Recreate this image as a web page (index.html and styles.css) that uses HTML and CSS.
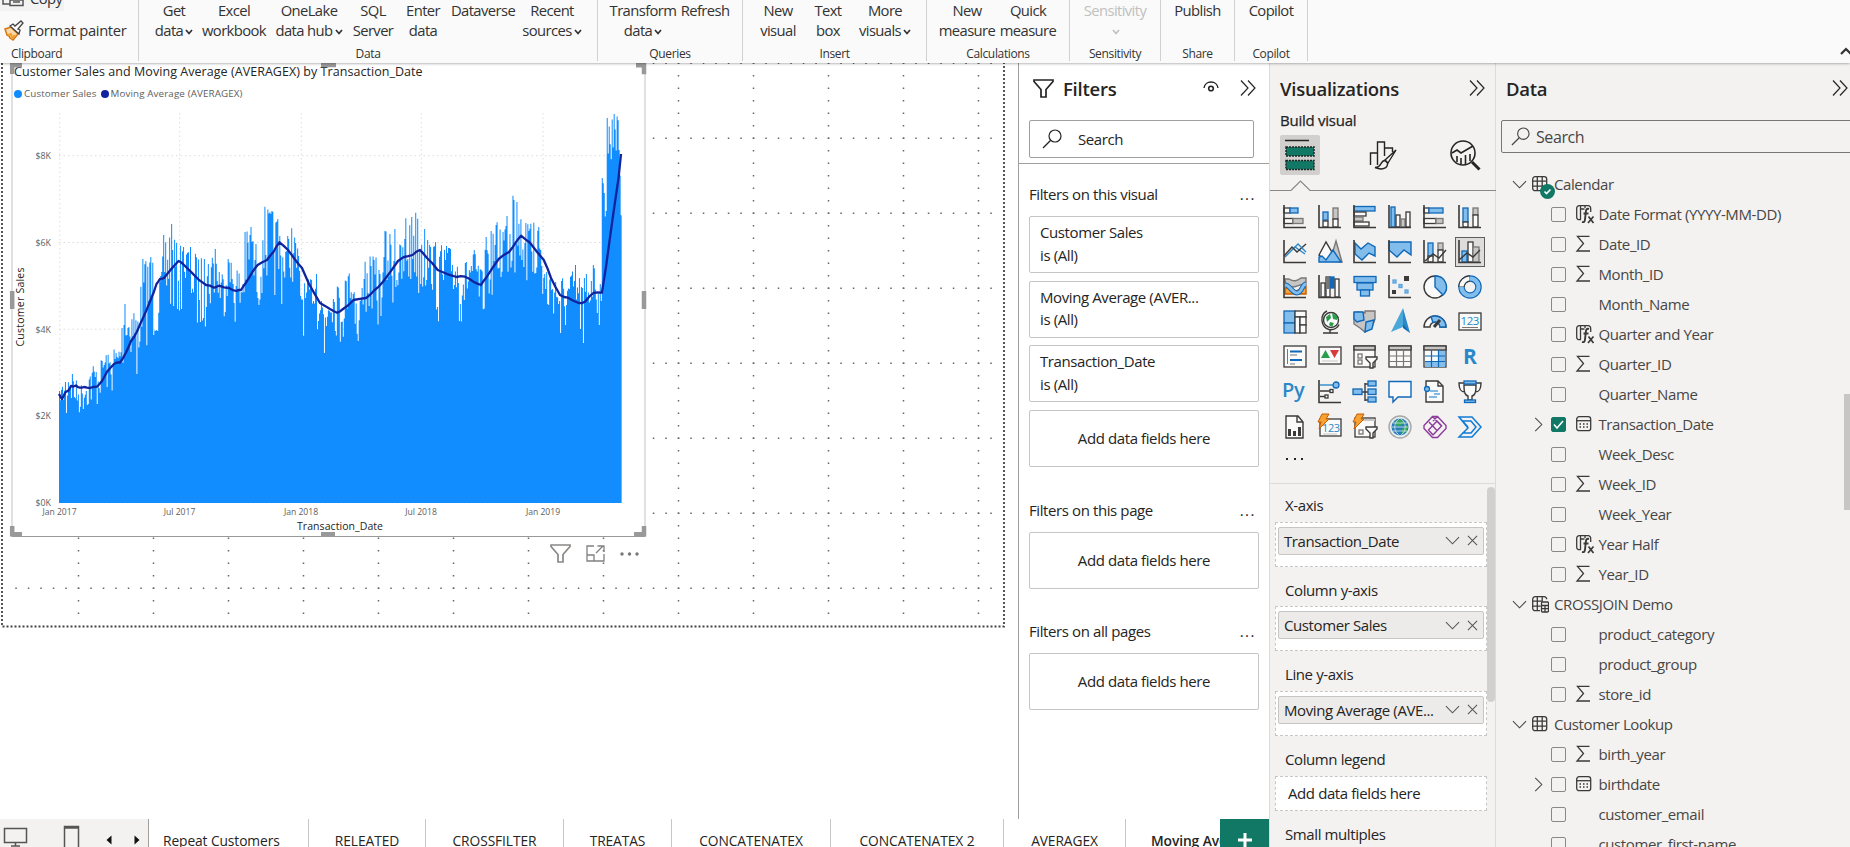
FILE: index.html
```html
<!DOCTYPE html>
<html lang="en">
<head>
<meta charset="utf-8">
<title>Report</title>
<link rel="stylesheet" href="styles.css">
</head>
<body>
<svg class="defs" width="0" height="0">
  <symbol id="collapse" viewBox="0 0 16 16"><path d="M1 .5L8 8l-7 7.5M8 .5L15 8l-7 7.5" fill="none" stroke="currentColor" stroke-width="1.2"/></symbol>
  <symbol id="search" viewBox="0 0 20 20"><circle cx="13" cy="7" r="6" fill="none" stroke="currentColor" stroke-width="1.2"/><path d="M8.7 11.3L1 19" stroke="currentColor" stroke-width="1.3"/></symbol>
  <symbol id="funnel" viewBox="0 0 21 19"><path d="M1 1h19v1.5l-7 8V18H8v-7.500L1 2.500z" fill="none" stroke="currentColor" stroke-width="1.7"/></symbol>
  <symbol id="down" viewBox="0 0 16 9"><path d="M1 1l7 7 7-7" fill="none" stroke="currentColor" stroke-width="1.1"/></symbol>
  <symbol id="right" viewBox="0 0 9 16"><path d="M1 1l7 7-7 7" fill="none" stroke="currentColor" stroke-width="1.1"/></symbol>
  <symbol id="close" viewBox="0 0 12 12"><path d="M1 1l10 10M11 1L1 11" stroke="currentColor" stroke-width="1.1"/></symbol>
  <symbol id="caret" viewBox="0 0 8 6"><path d="M1 1l3 3.500L7 1" fill="none" stroke="currentColor" stroke-width="1.7"/></symbol>
  <symbol id="sum" viewBox="0 0 18 18"><path d="M14.500 1.300H2.500L8.500 8.500l-6.500 7.500h13" fill="none" stroke="currentColor" stroke-width="1.300"/></symbol>
  <symbol id="table" viewBox="0 0 18 18"><rect x="1.700" y="1.700" width="14" height="14" rx="2.500"/><path d="M6.300 1.700v14M11.200 1.700v14M1.700 6.200h14M1.700 11.200h14"/></symbol>
  <symbol id="calc" viewBox="0 0 18 18"><path d="M9 15.700H4.200a2.500 2.500 0 0 1-2.500-2.500V4.200a2.500 2.500 0 0 1 2.500-2.500h9a2.500 2.500 0 0 1 2.500 2.500M6.300 1.700v14M11.200 1.700v5M1.700 6.200h9M1.700 11.200h8"/><rect x="10.500" y="7" width="7" height="10" rx="1"/><path d="M10.500 10.500h7M14 10.500V17M10.500 13.700h7"/></symbol>
  <symbol id="fx" viewBox="0 0 20 20"><path d="M6 15.700H4.200a2.500 2.500 0 0 1-2.500-2.500V4.200a2.500 2.500 0 0 1 2.500-2.500h9a2.500 2.500 0 0 1 2.500 2.500V8M5.500 1.700v14M5.500 5h4M10 1.700V4"/><path d="M14 5c-2.500-.8-3 .8-3.200 3L10 15.500c-.2 2-1 3-3 2.500M8.500 9.500h5" stroke-width="1.900"/><path d="M13.500 12.500l5 6.500M18.500 12.500l-5.500 6.500" stroke-width="1.700"/></symbol>
  <symbol id="date" viewBox="0 0 18 18"><rect x="1.700" y="1.700" width="14" height="14" rx="2.500"/><path d="M1.700 5.700h14"/><path d="M8 9h1.500M11.500 9H13M4.500 12H6M8 12h1.500M11.500 12H13M4.500 9H6" stroke-width="1.600"/></symbol>
</svg>

<div class="app">
  <header class="ribbon">
    <section class="group clip">
      <div class="copy"><svg width="24" height="8"><path d="M3 0v4h7M10 0h13v5.500H10zM13 2h7" fill="none" stroke="#555" stroke-width="1.500"/></svg><span>Copy</span></div>
      <div class="painter"><svg width="21" height="21" viewBox="0 0 21 21"><path d="M2 9l6-2 7 7-5 6-3-2-1-2-2-1-1-3z" fill="#fbd9a6" stroke="#d9730d" stroke-width="1.500"/><path d="M5 15l3-1 1 4 3-3" stroke="#f0a030" fill="none" stroke-width="2"/><path d="M7 6l9 8 1-4-2-1 5-6-2-2-6 5-2-2z" fill="#fafafa" stroke="#444" stroke-width="1.300"/></svg><span>Format painter</span></div>
      <h6>Clipboard</h6>
    </section>
    <section class="group g-data">
      <div class="cmds">
        <div class="cmd w64"><span>Get</span><span>data<svg class="caret"><use href="#caret"/></svg></span></div>
        <div class="cmd w56"><span>Excel</span><span>workbook</span></div>
        <div class="cmd w94"><span>OneLake</span><span>data hub<svg class="caret"><use href="#caret"/></svg></span></div>
        <div class="cmd w34"><span>SQL</span><span>Server</span></div>
        <div class="cmd w66"><span>Enter</span><span>data</span></div>
        <div class="cmd w54"><span>Dataverse</span></div>
        <div class="cmd w84"><span>Recent</span><span>sources<svg class="caret"><use href="#caret"/></svg></span></div>
      </div>
      <h6>Data</h6>
    </section>
    <section class="group g-queries">
      <div class="cmds">
        <div class="cmd w84"><span>Transform</span><span>data<svg class="caret"><use href="#caret"/></svg></span></div>
        <div class="cmd w40"><span>Refresh</span></div>
      </div>
      <h6>Queries</h6>
    </section>
    <section class="group g-insert">
      <div class="cmds">
        <div class="cmd w50"><span>New</span><span>visual</span></div>
        <div class="cmd w50"><span>Text</span><span>box</span></div>
        <div class="cmd w64"><span>More</span><span>visuals<svg class="caret"><use href="#caret"/></svg></span></div>
      </div>
      <h6>Insert</h6>
    </section>
    <section class="group g-calc">
      <div class="cmds">
        <div class="cmd w62"><span>New</span><span>measure</span></div>
        <div class="cmd w60"><span>Quick</span><span>measure</span></div>
      </div>
      <h6>Calculations</h6>
    </section>
    <section class="group g-sens">
      <div class="cmds"><div class="cmd off"><span>Sensitivity</span><span><svg class="caret"><use href="#caret"/></svg></span></div></div>
      <h6>Sensitivity</h6>
    </section>
    <section class="group g-share">
      <div class="cmds"><div class="cmd"><span>Publish</span></div></div>
      <h6>Share</h6>
    </section>
    <section class="group g-copilot">
      <div class="cmds"><div class="cmd"><span>Copilot</span></div></div>
      <h6>Copilot</h6>
    </section>
    <svg class="fold" width="10" height="8"><path d="M1 7l5-5 5 5" fill="none" stroke="#333" stroke-width="2.200"/></svg>
  </header>

  <main class="main">
    <div class="left">
      <div class="work">
        <div class="canvas">
          <svg class="page" id="page" width="1018" height="756" viewBox="0 63 1018 756"></svg>
          <div class="visual">
            <h1>Customer Sales and Moving Average (AVERAGEX) by Transaction_Date</h1>
            <div class="legend"><i></i><span>Customer Sales</span><i class="navy"></i><span>Moving Average (AVERAGEX)</span></div>
            <svg class="plot" id="plot" width="632" height="430" viewBox="12 104 632 430"></svg>
          </div>
          <svg class="handles" width="640" height="480" viewBox="8 62 640 480"><g fill="none" stroke="#999" stroke-width="4.500"><path d="M12.200 74V65.200H22M636 65.200h8v9M12.200 526v8.300H22M634 534.300h10V526M321 65h15M321 534.300h14M12.200 291v18M644 291v18"/></g></svg>
          <div class="tools">
            <svg width="21" height="19"><use href="#funnel"/></svg>
            <svg width="19" height="17" viewBox="0 0 19 17" fill="none" stroke="#808080" stroke-width="1.300"><path d="M8 1H1v15h17V9M1 10h7v6M10 8l7-7M11.500 1H18v6"/></svg>
            <svg width="19" height="4"><g fill="#777"><circle cx="2" cy="2" r="1.700"/><circle cx="9.500" cy="2" r="1.700"/><circle cx="17" cy="2" r="1.700"/></g></svg>
          </div>
        </div>

        <aside class="filters">
          <div class="fhead">
            <svg width="21" height="19"><use href="#funnel"/></svg><h2>Filters</h2>
            <svg class="eye" width="16" height="11" viewBox="0 0 16 11" fill="none" stroke="#252423"><path d="M1 7c1-8 13-8 14 0" stroke-width="1.400"/><circle cx="8" cy="7.500" r="2.300" stroke-width="1.600"/></svg>
            <svg width="16" height="16"><use href="#collapse"/></svg>
          </div>
          <div class="fsearch"><svg width="20" height="20"><use href="#search"/></svg><span>Search</span></div>
          <div class="flist">
            <div class="ftitle first"><span>Filters on this visual</span><b>...</b></div>
            <div class="card"><span>Customer Sales</span><span>is (All)</span></div>
            <div class="card"><span>Moving Average (AVER...</span><span>is (All)</span></div>
            <div class="card"><span>Transaction_Date</span><span>is (All)</span></div>
            <div class="card add">Add data fields here</div>
            <div class="ftitle"><span>Filters on this page</span><b>...</b></div>
            <div class="card add">Add data fields here</div>
            <div class="ftitle"><span>Filters on all pages</span><b>...</b></div>
            <div class="card add">Add data fields here</div>
          </div>
        </aside>
      </div>
      <nav class="tabs">
        <div class="nav">
          <svg width="148" height="28"><g fill="none" stroke="#555" stroke-width="1.500"><rect x="4.500" y="9.500" width="22" height="14"/><path d="M11 27h9M15.500 24v3"/><path d="M64.500 28V7.500h14V28M64 9h15"/></g><path d="M111.500 16.500l-5 4.500 5 4.500zM134.500 16.500l5 4.500-5 4.500z" fill="#111"/></svg>
        </div>
        <div class="tab t1">Repeat Customers</div>
        <div class="tab t2">RELEATED</div>
        <div class="tab t3">CROSSFILTER</div>
        <div class="tab t4">TREATAS</div>
        <div class="tab t5">CONCATENATEX</div>
        <div class="tab t6">CONCATENATEX 2</div>
        <div class="tab t7">AVERAGEX</div>
        <div class="tab t8">Moving Average</div>
        <div class="plus"><svg width="14" height="14"><path d="M7 0v14M0 7h14" stroke="#fff" stroke-width="3"/></svg></div>
      </nav>
    </div>

    <aside class="viz">
      <div class="vhead"><h2>Visualizations</h2><svg width="16" height="16"><use href="#collapse"/></svg></div>
      <h3>Build visual</h3>
      <div class="modes">
        <div class="mode on"><svg width="32" height="32" viewBox="0 0 32 32"><path d="M1 1.500h24" stroke="#252423" stroke-width="1.500"/><g fill="#117865" stroke="#252423" stroke-width="1.500" stroke-dasharray="2 1"><rect x="2" y="8" width="28" height="9"/><rect x="2" y="21.500" width="28" height="9"/></g></svg></div>
        <div class="mode"><svg width="28" height="30" viewBox="0 0 28 30" fill="none" stroke="#252423" stroke-width="1.400"><path d="M1.500 25V13h7v12M8.500 13V2h7v14M15.500 8h8v4"/><path d="M27 10L16 20l3 3z" fill="#f3f2f1"/><path d="M16 20.500c-5 0-3 7-10 7 7 3 13 1 12.500-4.500z" fill="#f3f2f1"/></svg></div>
        <div class="mode"><svg width="31" height="31" viewBox="0 0 31 31" fill="none" stroke="#252423" stroke-width="1.600"><circle cx="13" cy="13" r="12"/><path d="M2 13l5-3 4 3 12-7M7 16v6M11 18v6M15.500 15v9M20 14v7"/><path d="M22 22l7.500 7.500" stroke-width="3"/></svg></div>
      </div>
      <svg class="notch" width="226" height="12" viewBox="0 0 226 12"><path d="M0 10.500h21L30.500 1 40 10.500h186" fill="none" stroke="#8a8886" stroke-width="1.200"/></svg>
      <div class="gallery" id="gallery"></div>
      <div class="more"><i></i><i></i><i></i></div>
      <div class="wells">
        <div class="well"><label>X-axis</label><div class="drop"><div class="pill"><span>Transaction_Date</span><svg width="15" height="9"><use href="#down"/></svg><svg width="11" height="11"><use href="#close"/></svg></div></div></div>
        <div class="well"><label>Column y-axis</label><div class="drop"><div class="pill"><span>Customer Sales</span><svg width="15" height="9"><use href="#down"/></svg><svg width="11" height="11"><use href="#close"/></svg></div></div></div>
        <div class="well"><label>Line y-axis</label><div class="drop"><div class="pill"><span>Moving Average (AVE...</span><svg width="15" height="9"><use href="#down"/></svg><svg width="11" height="11"><use href="#close"/></svg></div></div></div>
        <div class="well short"><label>Column legend</label><div class="drop empty">Add data fields here</div></div>
        <div class="well"><label>Small multiples</label></div>
        <div class="vscroll"></div>
      </div>
    </aside>

    <aside class="data">
      <div class="dhead"><h2>Data</h2><svg width="16" height="16"><use href="#collapse"/></svg></div>
      <div class="dsearch"><svg width="19" height="19"><use href="#search"/></svg><span>Search</span></div>
      <div class="tree" id="tree"></div>
      <div class="dscroll"></div>
    </aside>
  </main>
</div>
<script src="app.js"></script>
</body>
</html>
```
FILE: styles.css
```css
* { box-sizing: border-box; }
body { margin: 0; width: 1850px; height: 847px; overflow: hidden; font-family: "Open Sans", "Noto Sans", sans-serif; font-size: 15px; letter-spacing: -0.4px; color: #252423; background: #fff; }
h1, h2, h3, h6 { margin: 0; font-weight: 400; }
svg { display: block; flex: none; overflow: visible; }
.defs { position: absolute; }
.app { display: flex; flex-direction: column; height: 847px; }

/* ribbon */
.ribbon { position: relative; z-index: 5; height: 63px; flex: none; display: flex; background: #fafafa; box-shadow: 0 0 3px rgba(0,0,0,.5); font-size: 14.8px; letter-spacing: -0.6px; color: #333; }
.group { height: 61px; border-right: 1px solid #d0d0d0; display: flex; flex-direction: column; justify-content: space-between; }
.group h6 { font-size: 12px; letter-spacing: -0.35px; line-height: 16px; text-align: center; margin-bottom: -1px; }
.clip { width: 139px; }
.clip h6 { text-align: left; padding-left: 11px; }
.copy { display: flex; height: 11px; width: 64px; background: #f3f3f3; gap: 6px; }
.copy span { line-height: 20px; margin-top: -12px; }
.painter { display: flex; align-items: center; gap: 4px; padding-left: 3px; height: 24px; margin-bottom: -3px; letter-spacing: -0.35px; }
.cmds { display: flex; line-height: 20px; }
.cmd { display: flex; flex-direction: column; align-items: center; white-space: nowrap; }
.cmd span { display: flex; align-items: center; height: 20px; }
.caret { width: 8px; height: 6px; margin-left: 2px; margin-top: 4px; }
.off { color: #c0c0c0; }
.g-data { width: 459px; } .g-data .cmds { padding-left: 3px; }
.g-queries { width: 145px; } .g-queries .cmds { padding-left: 3px; }
.g-insert { width: 184px; } .g-insert .cmds { padding-left: 10px; }
.g-calc { width: 143px; } .g-calc .cmds { padding-left: 9px; }
.g-sens { width: 91px; } .g-share { width: 74px; } .g-copilot { width: 73px; }
.g-sens .cmds, .g-share .cmds, .g-copilot .cmds { justify-content: center; }
.w34 { width: 34px; } .w40 { width: 40px; } .w50 { width: 50px; } .w54 { width: 54px; } .w56 { width: 56px; } .w60 { width: 60px; } .w62 { width: 62px; } .w64 { width: 64px; } .w66 { width: 66px; } .w84 { width: 84px; } .w94 { width: 94px; }
.fold { margin: 47px 0 0 auto; width: 10px; }

.main { flex: 1; display: flex; min-height: 0; }
.left { width: 1269px; display: flex; flex-direction: column; }
.work { height: 756px; display: flex; }
.canvas { width: 1018px; position: relative; background: #fff; }
.page { position: absolute; left: 0; top: 0; }

/* visual */
.visual { position: absolute; left: 11px; top: 0; width: 635px; height: 474px; background: #fff; border: 2px solid #e1e1e1; border-top: 0; border-bottom: 1px solid #999; }
.visual h1 { font-size: 12.5px; line-height: 16px; letter-spacing: 0.05px; padding: 1px 0 0 1px; white-space: nowrap; }
.legend { display: flex; align-items: center; font-size: 9.800px; letter-spacing: 0.12px; line-height: 12px; color: #605e5c; padding: 8px 0 0 1px; white-space: nowrap; }
.legend i { width: 8px; height: 8px; border-radius: 50%; background: #118dff; margin-right: 2px; }
.legend i.navy { background: #12239e; margin-left: 4px; }
.plot { position: absolute; left: -1px; top: 41px; letter-spacing: 0; }
.handles { position: absolute; left: 8px; top: -1px; }
.tools { position: absolute; left: 550px; top: 481px; display: flex; gap: 15px; align-items: center; color: #8a8886; }

/* filters */
.filters { width: 251px; border-left: 1px solid #a19f9d; background: #fff; }
.fhead { display: flex; align-items: center; height: 48px; padding: 2px 13px 0 14px; }
h2 { font-size: 18.500px; font-weight: 600; letter-spacing: -0.25px; }
.fhead h2 { margin-left: 9px; }
.fhead .eye { margin: -3px 21px 0 auto; }
.fsearch { margin: 9px 0 5px 10px; width: 225px; height: 38px; border: 1px solid #a19f9d; border-radius: 2px; display: flex; align-items: center; padding-left: 12px; gap: 16px; }
.flist { border-top: 1px solid #a19f9d; padding: 19px 9px 0 10px; }
.ftitle { height: 22px; margin: 31.500px 0 11px; display: flex; justify-content: space-between; align-items: center; }
.ftitle.first { margin-top: 0; }
.ftitle b { font-weight: 400; letter-spacing: 1.500px; margin-right: 4px; }
.card { height: 57px; width: 230px; border: 1px solid #c8c6c4; border-radius: 2px; margin-bottom: 7.700px; padding: 4px 10px; display: flex; flex-direction: column; line-height: 22.500px; }
.card.add { align-items: center; justify-content: center; }

/* page tabs */
.tabs { height: 28px; display: flex; overflow: hidden; font-size: 13.800px; letter-spacing: -0.1px; }
.nav { width: 149px; background: #f3f2f1; border-right: 1px solid #a19f9d; }
.tab { border-right: 1px solid #c8c6c4; height: 28px; line-height: 20px; padding-top: 12px; text-align: center; white-space: nowrap; overflow: hidden; }
.t1 { width: 160px; text-align: left; padding-left: 14px; } .t2 { width: 117px; } .t3 { width: 138px; } .t4 { width: 108px; } .t5 { width: 159px; } .t6 { width: 173px; } .t7 { width: 122px; }
.t8 { width: 94px; text-align: left; padding-left: 25px; border: 0; font-weight: 600; }
.plus { width: 49px; background: #117865; display: flex; justify-content: center; padding-top: 14px; }

/* visualizations */
.viz { width: 227px; background: #f3f2f1; border: solid #dcdbda; border-width: 0 1px; display: flex; flex-direction: column; }
.vhead { height: 47px; padding: 3px 10px 0; display: flex; justify-content: space-between; align-items: center; }
h3 { font-size: 15px; padding-left: 10px; line-height: 20px; height: 25px; letter-spacing: -0.25px; -webkit-text-stroke: .25px #252423; }
.modes { display: flex; padding-left: 10px; height: 40px; gap: 42.500px; }
.mode { width: 40px; height: 40px; display: flex; align-items: center; justify-content: center; }
.mode.on { background: #d2d0ce; border-radius: 2px; }
.notch { margin-top: 5px; }
.gallery { display: grid; grid-template-columns: repeat(6, 35px); grid-auto-rows: 35px; padding: 7px 0 0 7px; }
.gallery div { display: flex; align-items: center; justify-content: center; }
.gallery .sel { background: #dedddc; box-shadow: inset 0 0 0 1px #605e5c; margin: 2.500px; }
.more { display: flex; gap: 5.500px; padding: 14px 0 0 16px; }
.more i { width: 2px; height: 2px; background: #252423; }
.wells { margin-top: 23px; flex: 1; overflow: hidden; border-top: 1px solid #dcdbda; position: relative; }
.well { height: 84.700px; padding-left: 5px; }
.well label { display: block; height: 37.500px; line-height: 42px; padding-left: 10px; }
.drop { width: 212px; height: 45px; border: 1px dashed #c8c6c4; background: #fff; padding: 4px 2px; }
.pill { height: 28px; border: 1px solid #c8c6c4; border-radius: 2px; background: #edebe9; display: flex; align-items: center; padding: 0 5px; }
.pill span { flex: 1; white-space: nowrap; }
.pill svg { color: #555; }
.pill svg + svg { margin-left: 7px; }
.empty { height: 35px; padding: 0 0 0 12px; line-height: 32px; }
.well.short { height: 84.200px; height: 74.700px; }
.vscroll { position: absolute; right: 0; top: 3px; width: 8px; height: 215px; border-radius: 4px; background: #d2d0ce; }

/* data */
.data { width: 354px; background: #f3f2f1; position: relative; }
.dhead { height: 57px; padding: 0 2px 7px 10px; display: flex; justify-content: space-between; align-items: center; }
.dsearch { margin-left: 5px; width: 360px; height: 33px; border: 1px solid #797775; border-radius: 2px; display: flex; align-items: center; padding-left: 9px; gap: 6px; font-size: 16px; color: #484644; }
.tree { padding-top: 16px; height: 694px; overflow: hidden; color: #484644; }
.row { height: 30px; display: flex; align-items: center; white-space: nowrap; }
.row.parent { padding-left: 16px; }
.row.parent > svg:first-child { width: 15px; height: 9px; margin-right: 4px; }
.row.parent .ico { width: 23px; position: relative; }
.ico svg { color: #3b3a39; fill: none; stroke: #3b3a39; stroke-width: 1.300; }
.ico .badge { position: absolute; left: 9px; top: 9px; stroke: none; }
.row.child { padding-left: 38px; }
.exp { width: 17px; }
.exp svg { width: 9px; height: 15px; }
.box { width: 15px; height: 15px; border: 1px solid #8a8886; border-radius: 2px; margin-right: 9px; }
.box.on { background: #117865; border-color: #117865; }
.row.child .ico { width: 23.500px; }
.dscroll { position: absolute; right: 0; top: 331px; width: 6px; height: 116px; background: #c8c6c4; }
```
FILE: app.js
```js
// ---------- data tree ----------
const fields = [
  ['p', 'table', 'Calendar', 'badge'], ['c', 'fx', 'Date Format (YYYY-MM-DD)'], ['c', 'sum', 'Date_ID'], ['c', 'sum', 'Month_ID'],
  ['c', '', 'Month_Name'], ['c', 'fx', 'Quarter and Year'], ['c', 'sum', 'Quarter_ID'], ['c', '', 'Quarter_Name'],
  ['c', 'date', 'Transaction_Date', 'on'], ['c', '', 'Week_Desc'], ['c', 'sum', 'Week_ID'], ['c', '', 'Week_Year'],
  ['c', 'fx', 'Year Half'], ['c', 'sum', 'Year_ID'], ['p', 'calc', 'CROSSJOIN Demo'], ['c', '', 'product_category'],
  ['c', '', 'product_group'], ['c', 'sum', 'store_id'], ['p', 'table', 'Customer Lookup'], ['c', 'sum', 'birth_year'],
  ['c', 'date', 'birthdate'], ['c', '', 'customer_email'], ['c', '', 'customer_first-name']
];
const badge = '<svg class="badge" width="15" height="15"><circle cx="7.500" cy="7.500" r="7.500" fill="#117865"/><path d="M4.500 7.500l2 2 4-4" fill="none" stroke="#fff" stroke-width="1.600"/></svg>';
document.getElementById('tree').innerHTML = fields.map(([kind, icon, name, flag]) => {
  const size = icon === 'fx' ? 20 : 18;
  const pic = icon ? `<svg width="${size}" height="${size}"><use href="#${icon}"/></svg>` : '';
  if (kind === 'p') return `<div class="row parent"><svg><use href="#down"/></svg><div class="ico">${pic}${flag ? badge : ''}</div><span>${name}</span></div>`;
  const exp = icon === 'date' ? '<svg><use href="#right"/></svg>' : '';
  const tick = flag ? '<svg width="13" height="13"><path d="M2 6.500l3 3.500 6-7" fill="none" stroke="#fff" stroke-width="1.500"/></svg>' : '';
  return `<div class="row child"><div class="exp">${exp}</div><div class="box ${flag || ''}">${tick}</div><div class="ico">${pic}</div><span>${name}</span></div>`;
}).join('');

// ---------- visual gallery ----------
const D = '#3b3a39', B = '#1068b8', F = '#83bdec', G = '#c8c6c4', H = '#797775';
const r = (x, y, w, h, f, s) => `<rect x="${x}" y="${y}" width="${w}" height="${h}" fill="${f}" stroke="${s}"/>`;
const p = (d, f = 'none', s = D, w = 1.4) => `<path d="${d}" fill="${f}" stroke="${s}" stroke-width="${w}"/>`;
const t = (x, y, size, s, weight = 400) => `<text x="${x}" y="${y}" font-size="${size}" font-weight="${weight}" fill="#2b88c8" stroke="none">${s}</text>`;
const axis = p('M1 0v22.500h22', 'none', D, 1.6);
const W = '#fafafa';
const funnel = p('M13 12h11v2l-4 4v5h-3v-5l-4-4z', W);
const bolt = '<path d="M4-1h7l-3 5h3L1 14l2-7H0z" fill="#f7a233" stroke="#c65d00" stroke-width="1"/>';
const icons = [
  r(1, 3, 6, 5, W, D) + r(7, 3, 8, 5, F, B) + r(1, 13.5, 9, 5, W, D) + r(10, 13.5, 10, 5, G, H) + axis,
  r(5, 7, 5, 8, F, B) + r(5, 16, 5, 6, W, D) + r(15, 3, 5, 11, G, H) + r(15, 14, 5, 8, W, D) + axis,
  r(1, 1.500, 21, 4.500, F, B) + r(1, 7, 12, 4, W, D) + r(1, 12, 9, 4, G, H) + r(1, 17, 15, 4, W, D) + axis,
  r(3, 2, 4, 20, F, B) + r(8, 10, 4, 12, W, D) + r(13, 14, 4, 8, G, H) + r(18, 7, 4, 15, W, D) + axis,
  r(1, 3, 5, 5, W, D) + r(6, 3, 14, 5, F, B) + r(1, 13.5, 12, 5, W, D) + r(13, 13.5, 7, 5, G, H) + axis,
  r(5, 3, 5, 14, F, B) + r(5, 17, 5, 5, W, D) + r(15, 3, 5, 7, G, H) + r(15, 10, 5, 12, W, D) + axis,

  p('M2 17L12 7l10 7', 'none', '#2b88c8') + p('M1 16l8-9 5 5 9-8') + p('M12 7l3-3 8 8', 'none', '#2b88c8') + axis,
  p('M12 21L18 1l6 21z', G, H) + p('M1 15L8 2l7 12-7 7z', W) + p('M1 22V17l3-1 4 4 7-10 8 12z', F, B),
  p('M2 3l6 6 7-6 7 4v9l-6-3-7 7-7-6z', F, B) + axis,
  p('M1 2h22v13l-7-5-7 7-8-7z', F, B) + axis,
  r(5, 3, 5, 14, F, B) + r(15, 3, 5, 7, G, H) + r(5, 16, 5, 6, W, D) + r(15, 10, 5, 12, W, D) + p('M2 21l8-7 6 4 7-8') + axis,
  r(4, 11, 5, 11, F, B) + r(10, 2, 5, 20, W, D) + r(15, 7, 6, 15, G, H) + p('M1 20l8-7 6 4 7-7') + axis,

  p('M2 4h4c5 3 8 2 12-1h5v7c-6-3-10 5-20 1z', G, H) + p('M2 13h6l5 3 10-4v7H2z', '#f7a233', '#c65d00') + p('M2 10c4-1 7 8 12 8s5-9 9-9', 'none', B, 5) + p('M2 10c4-1 7 8 12 8s5-9 9-9', 'none', F, 3) + axis,
  r(3, 8, 4, 14, W, D) + r(8, 2, 4, 20, W, D) + r(12, 2, 4, 11, B, B) + r(17, 4, 4, 18, W, D) + p('M10 2v12', 'none', H, 3) + axis,
  r(1, 1.500, 22, 6, F, B) + r(4, 8, 16, 7, F, B) + r(7.500, 15, 9, 6, F, B),
  `<path d="M16 1h5v5h-5zM4 15h4v4H4z" fill="${D}"/>` + r(5, 5, 3, 3, F, '#5ba4dc') + r(11, 9.500, 3, 3, F, '#5ba4dc') + r(17, 15, 3, 3, F, '#5ba4dc') + axis,
  `<circle cx="12" cy="12" r="11" fill="${W}" stroke="${D}" stroke-width="1.4"/>` + p('M12 1v11l8 8A11 11 0 0 0 12 1z', F, B),
  `<circle cx="12" cy="12" r="8.500" fill="none" stroke="${B}" stroke-width="6.500"/><circle cx="12" cy="12" r="8.500" fill="none" stroke="${F}" stroke-width="4.200"/>` + p('M12 3.500A8.500 8.500 0 0 0 3.500 12', 'none', D, 6.500) + p('M11.500 3.500A8.500 8.500 0 0 0 3.500 11.500', 'none', W, 4.200),

  r(1, 1, 11, 12, F, B) + r(1, 13, 11, 10, F, B) + r(12, 1, 11, 6, W, D) + r(12, 7, 5, 16, W, D) + r(17, 7, 6, 8, W, D) + r(17, 15, 6, 8, W, D),
  `<circle cx="13" cy="10" r="7.500" fill="${W}" stroke="${D}" stroke-width="1.4"/><path d="M8 7l4-3 1 4-4 4zM14 3l5 3v4l-4-1zM12 12l4 1-2 4-3-2z" fill="#2a9d4a"/>` + p('M9 1C1 5 3 17 11 19.500c5 1 9-2 10-5M12 20v3M5 23h15'),
  p('M1 3l4-1 7 1V1h10v8l-3 8-7 5-5-4-6-4z', G, H) + p('M1 2h9l1 8-7 2-3-3zM13 12l8-2-2 9-7 3z', F, B),
  '<path d="M15-2L3 22l12-5z" fill="#4aa8d8"/><path d="M15-2v19l7 6z" fill="#2b88c8"/><path d="M15 14l7 9-7-5z" fill="#1068b8"/>',
  p('M1 17a11 11 0 0 1 22 0h-6a5 5 0 0 0-10 0z', W) + p('M8 6.800A11 11 0 0 1 23 17h-6a5 5 0 0 0-7-4.500z', F, B) + p('M11 17l6-7', 'none', D, 3),
  r(1, 3, 22, 17, W, D) + t(2.500, 15, 11.500, '123') + p('M4 17.500h16', 'none', H, 1),

  r(1, 1, 22, 21, W, D) + p('M4.500 4v15', 'none', H, 1) + p('M7 6.500h12M7 15h12', 'none', B, 2.200) + p('M7 10h7M7 19h5', 'none', H, 1.200),
  r(1, 2, 22, 17, W, D) + '<path d="M3 13l4.500-8 4.500 8z" fill="#2a9d4a"/><path d="M12 5h9l-4.500 8z" fill="#d83b3b"/>' + p('M4 16h16', 'none', G, 1),
  r(1, 1, 21, 21, W, D) + r(1, 1, 21, 4, G, D) + r(5, 9, 4, 4, W, H) + r(5, 15, 4, 4, W, H) + funnel,
  r(1, 1, 22, 21, W, D) + r(1, 1, 22, 4, G, D) + p('M1 11h22M1 16.500h22M8.500 5v17M15.500 5v17', 'none', H, 1.200),
  r(1, 1, 22, 21, W, D) + '<path d="M15 5h7v17H2v-6h13z" fill="#83bdec"/>' + r(1, 1, 22, 4, G, D) + p('M2 11h20M2 16.500h20M8.500 5v17M15.500 5v17', 'none', B, 1.200),
  t(5, 19, 21, 'R', 700),

  t(-1, 17, 20, 'Py', 600),
  p('M2 5h15', 'none', '#2b88c8') + p('M2 11h10M2 16.500h5') + r(12, 9.500, 3, 3, W, D) + r(7, 15, 3, 3, W, D) + `<circle cx="18" cy="5" r="3" fill="${F}" stroke="${B}"/>` + axis,
  p('M9 12h7M12 3v18M12 4h4M12 20h4') + r(0, 9, 9, 5.500, F, B) + r(15, 1, 8, 5, F, B) + r(15, 9, 8, 5.500, F, B) + r(15, 17, 8, 5, F, B),
  p('M1 1.500h22V17H10l-5 5v-5H1z', W, B),
  p('M3 1h12l5 5v16H3z', W) + p('M15 1v5h5') + p('M7 11h8M11 14h6M6 17h8', 'none', '#5ba4dc') + `<circle cx="4" cy="9" r="2.500" fill="${F}" stroke="${B}"/>`,
  p('M6 3H1c0 7 2 9 6 9M18 3h5c0 7-2 9-6 9M6 5c0 8 1 10 4 11v4h4v-4c3-1 4-3 4-11z', W) + r(6, 1, 12, 3, F, B) + r(6.500, 20, 11, 2.500, F, B),

  p('M3 1h12l5 6v16H3z', W) + p('M14 1v6h6') + p('M6.500 21v-7M11.500 21v-5M16.500 21V12', 'none', D, 3),
  r(2, 4, 21, 17, W, D) + t(4, 17, 11, '123') + p('M5 19h14', 'none', G, 1) + bolt,
  r(2, 3, 20, 19, W, D) + p('M8 5h14', 'none', G, 2) + r(6, 15, 4, 4, W, H) + funnel + bolt,
  '<circle cx="12" cy="12" r="11" fill="#e6eef2" stroke="#a8a8a8" stroke-width="1.400"/><circle cx="12" cy="12" r="8.500" fill="#2b7cba"/><path d="M6 7l7-3 3 4-6 4zM14 14l5-4 0 6-5 3z" fill="#35a852"/>' + p('M4 12h16M5 8h14M5 16h14M12 3c-7 5-7 13 0 18 7-5 7-13 0-18', 'none', '#bfe0e8', .9),
  p('M9.500 1.500h5L23 10.500v3l-8.500 9h-5L1 13.500v-3zM9.500 1.500l9 9.500-8.500 9M14.500 1.500L10 6M6 7l8.500 9M10 20l-4.500-5L14 6l5 5', 'none', '#8c3a9c', 1.400),
  p('M1 2h13l9 10-9 10H1l9-9zM1 2l9 10M4 18h9l5-6-5-6H5', 'none', '#0f7bd6', 1.500)
];
document.getElementById('gallery').innerHTML = icons.map((body, i) =>
  `<div${i === 11 ? ' class="sel"' : ''}><svg width="24" height="24" stroke-width="1.3">${body}</svg></div>`).join('');

// ---------- report page grid ----------
let grid = '<g stroke="#666" stroke-width="1.500" fill="none">';
for (let x = 78.5; x < 1000; x += 75) grid += `<path d="M${x} 62.500V625" stroke-dasharray="1.5 11"/>`;
for (let y = 63.300; y < 620; y += 75) grid += `<path d="M15.300 ${y}H996" stroke-dasharray="1.5 11"/>`;
grid += '</g><path d="M2 63V626.500H1004V63" fill="none" stroke="#444" stroke-width="1.800" stroke-dasharray="2 2"/>';
document.getElementById('page').innerHTML = grid;

// ---------- combo chart ----------
const line = [59,394,62,399,65,393,68,391,71,386,76,385.5,80,387.7,84,387,90,388,97,386.7,102,381,107,371.7,114,364,120,362.5,126,352.5,131,341,137,331.5,143,318,151,299,156.5,284,160,279,164,278,178.5,261,183,264,199,280,206,285,214,287.7,219,285.7,229,288,236.5,291,241,290,246,282.7,252.5,271.7,257.6,265,267,260,273.6,251.7,279.5,242.3,288,250,294.6,259,302,268,309,284,320,303,330,309,337,312.7,343,309,353.5,300,366,298,374.6,290,383,281.7,398,261,404,257,412.5,255,420,250,427,258,437.7,270,456.6,277,465,276.7,473.5,281.7,481,285,486,278,498.7,259,509,252,515.6,242.7,521,235.7,530,242.7,543.8,260,551,278,560,295,568,297.7,578.7,303,585,301.7,593.4,293,601.9,292.7,606,266.7,612.4,220,618.7,176.7,621,154];
// tallest and shortest bar tops along the axis
const high = [59,391,63,382,69,361,75,378,79,386,86,377,92,363,99,366,103,350,109,355,114,345,120,342,123,304,128,309,135,305,139,297,143,259,151,257,157,261,160,278,164,235,171,224,176,243,184,247,190,247,196,254,204,259,215,249,222,271,228,259,235,262,242,275,245,232,251,227,257,247,262,245,265,207,272,211,278,219,282,240,285,238,292,228,297,243,301,283,307,280,316,274,322,290,326,288,337,287,344,276,349,274,358,280,362,284,365,262,370,256,376,257,382,277,385,231,395,229,401,246,406,218,416,213,425,229,431,248,436,242,446,246,458,250,466,261,474,250,482,272,486,237,497,222,507,216,513,196,518,213,526,223,533,223,539,227,543,245,548,273,556,272,568,278,575,265,580,278,586,268,593,265,600,275,602,178,605,188,607,118,614,114,619,122,620,200,621,222];
const low = [59,396,62,406,70,400,78,411,88,402,97,400,103,383,117,390,121,362,132,345,137,374,140,332,157,328,164,300,181,306,186,290,198,320,206,318,213,289,222,316,228,290,238,328,246,290,258,303,265,270,280,296,290,270,299,300,302,324,306,334,311,297,324,352,330,311,340,341,350,300,358,340,363,326,370,300,378,323,386,285,403,308,410,275,420,290,430,275,441,325,450,285,460,315,470,290,480,322,490,285,505,275,520,255,526,285,538,270,545,332,550,300,561,333,572,310,583,340,592,296,600,322,602,240,608,190,614,140,619,160,621,230];
// single days that stand out: x, bar top
const days = [[66.5,413],[124.5,304],[137,374],[143.3,259],[150.7,257],[164,235],[171.2,224],[184,247],[190,247],[204.2,259],[215,249],[228,259],[245,232],[251,227],[265,206.8],[271.5,211],[278,219],[292,228.3],[316,274],[324.5,353],[337,286.5],[349.7,273.5],[358.3,341],[365.5,261.7],[370.5,256.5],[385,231],[395,229],[405.8,218.3],[416,212.7],[425,229],[435.8,242],[446,246],[474,250],[486,237],[497,222.3],[507,216],[512.7,195.7],[514.3,200],[517.3,202],[526.2,223],[533.4,222.7],[539,227],[561,333],[575,265],[583,343],[593.4,265],[602.3,178],[607,118],[614,114],[617,116.5]];
const at = (pts, x) => {
  for (let i = 0; i < pts.length - 2; i += 2) if (x <= pts[i + 2]) {
    const k = (x - pts[i]) / (pts[i + 2] - pts[i]);
    return pts[i + 1] + k * (pts[i + 3] - pts[i + 1]);
  }
  return pts[pts.length - 1];
};
let seed = 7;
const rand = () => (seed = (seed * 16807) % 2147483647) / 2147483647;
let bars = '';
const day = 0.6615;
for (let x = 59; x < 621; x += day * 1.5) {
  const h = at(high, x), l = at(low, x);
  const k = rand();
  const share = k < .2 ? k * .5 : k < .6 ? .1 + (k - .2) * 1.1 : k < .85 ? .54 + (k - .6) * 1.7 : .97 + (k - .85) * 1.6;
  const peak = days.find(q => q[0] >= x && q[0] < x + day * 1.5);
  bars += `M${x.toFixed(2)} 503V${(peak ? peak[1] : h + (l - h) * share).toFixed(1)}h1.02V503z`;
}
let d = '';
for (let i = 0; i < line.length; i += 2) {
  if (i && line[i] < 602) {
    const mx = (line[i] + line[i - 2]) / 2, my = (line[i + 1] + line[i - 1]) / 2;
    d += `L${mx} ${my + (rand() - .5) * 1.6}`;
  }
  d += (i ? 'L' : 'M') + line[i] + ' ' + line[i + 1];
}
let plot = '<g stroke="#dcdcdc" stroke-dasharray="1.500 3">';
[155.7, 242.5, 329.2, 416, 502.7].forEach(y => plot += `<path d="M59 ${y}H621"/>`);
[59.800, 179.700, 301.300, 421.300, 543].forEach(x => plot += `<path d="M${x} 113V503"/>`);
plot += `</g><path d="${bars}" fill="#118dff"/><path d="${d}" fill="none" stroke="#12239e" stroke-width="2.300" stroke-linejoin="round"/><g font-size="8.600" fill="#605e5c">`;
[['$8K', 155.7], ['$6K', 242.5], ['$4K', 329.2], ['$2K', 416], ['$0K', 502.7]].forEach(([s, y]) => plot += `<text x="35.500" y="${y + 3.300}" textLength="15.500" lengthAdjust="spacingAndGlyphs">${s}</text>`);
[['Jan 2017', 59.5], ['Jul 2017', 179.5], ['Jan 2018', 301], ['Jul 2018', 421], ['Jan 2019', 543]].forEach(([s, x]) => plot += `<text x="${x}" y="515" text-anchor="middle">${s}</text>`);
plot += '</g><g font-size="10.500" fill="#252423"><text x="340" y="530" text-anchor="middle" textLength="86">Transaction_Date</text><text transform="translate(23.500 307) rotate(-90)" text-anchor="middle" textLength="79">Customer Sales</text></g>';
document.getElementById('plot').innerHTML = plot;
```
